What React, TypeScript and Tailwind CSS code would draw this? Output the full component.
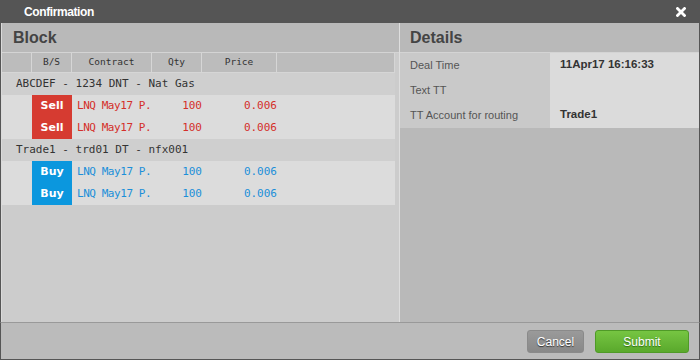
const mono = { fontFamily: '"DejaVu Sans Mono", monospace' };

type Trade = { side: "Buy" | "Sell"; contract: string; qty: string; price: string };

const groups: { name: string; trades: Trade[] }[] = [
  {
    name: "ABCDEF - 1234 DNT - Nat Gas",
    trades: [
      { side: "Sell", contract: "LNQ May17 P.", qty: "100", price: "0.006" },
      { side: "Sell", contract: "LNQ May17 P.", qty: "100", price: "0.006" },
    ],
  },
  {
    name: "Trade1 - trd01 DT - nfx001",
    trades: [
      { side: "Buy", contract: "LNQ May17 P.", qty: "100", price: "0.006" },
      { side: "Buy", contract: "LNQ May17 P.", qty: "100", price: "0.006" },
    ],
  },
];

const details = [
  { label: "Deal Time", value: "11Apr17 16:16:33" },
  { label: "Text TT", value: "" },
  { label: "TT Account for routing", value: "Trade1" },
];

function TradeRow({ trade }: { trade: Trade }) {
  const sell = trade.side === "Sell";
  const color = sell ? "text-[#d42f2a]" : "text-[#1b8fd9]";
  return (
    <div className="flex h-[22px] bg-[#dcdcdc] text-[11px]" style={mono}>
      <div className="w-[30px]" />
      <div
        className={`w-[40px] flex items-center justify-center font-bold text-white text-[11px] ${
          sell ? "bg-[#d63b31]" : "bg-[#0b97de]"
        }`}
        style={{ fontFamily: '"DejaVu Sans", sans-serif' }}
      >
        {trade.side}
      </div>
      <div className={`w-[80px] pl-[5px] flex items-center whitespace-nowrap tracking-[-0.45px] ${color}`}>
        {trade.contract}
      </div>
      <div className={`w-[50px] flex items-center justify-end ${color}`}>{trade.qty}</div>
      <div className={`w-[75px] flex items-center justify-end ${color}`}>{trade.price}</div>
    </div>
  );
}

export default function App() {
  return (
    <div
      className="w-[700px] h-[360px] bg-[#555555] flex flex-col overflow-hidden"
      style={{ fontFamily: '"Liberation Sans", Arial, sans-serif' }}
    >
      {/* Title bar */}
      <div className="h-[23px] flex items-center justify-between pl-[24px] pr-[14px] shrink-0">
        <span className="text-white text-[12px] font-bold tracking-[-0.4px]">Confirmation</span>
        <svg width="10" height="10" viewBox="0 0 10 10">
          <path d="M1.5 1.5 L8.5 8.5 M8.5 1.5 L1.5 8.5" stroke="white" strokeWidth="2.8" strokeLinecap="square" />
        </svg>
      </div>

      {/* Body */}
      <div className="flex flex-1 pl-px pr-px min-h-0">
        {/* Block panel */}
        <div className="w-[398px] bg-[#cccccc] flex flex-col border-l border-[#dadada]">
          <div className="h-[30px] bg-[#b9b9b9] border-b border-[#d4d4d4] flex items-center pl-[11px]">
            <span className="text-[16px] font-bold text-[#444444]">Block</span>
          </div>
          <div className="pr-[4px]">
            <div className="flex h-[20px] bg-[#bcbcbc] text-[9.5px] text-[#333333]" style={mono}>
              <div className="w-[30px] border-r border-b border-[#d6d6d6]" />
              <div className="w-[40px] border-r border-b border-[#d6d6d6] flex items-center justify-center">B/S</div>
              <div className="w-[80px] border-r border-b border-[#d6d6d6] flex items-center justify-center">Contract</div>
              <div className="w-[50px] border-r border-b border-[#d6d6d6] flex items-center justify-center">Qty</div>
              <div className="w-[75px] border-r border-b border-[#d6d6d6] flex items-center justify-center">Price</div>
              <div className="flex-1 border-r border-b border-[#d6d6d6]" />
            </div>
            {groups.map((g) => (
              <div key={g.name}>
                <div
                  className="h-[22px] bg-[#cfcfcf] flex items-center pl-[14px] text-[11px] text-[#333333]"
                  style={mono}
                >
                  {g.name}
                </div>
                {g.trades.map((t, i) => (
                  <TradeRow key={i} trade={t} />
                ))}
              </div>
            ))}
          </div>
        </div>

        <div className="w-px bg-[#dedede]" />

        {/* Details panel */}
        <div className="flex-1 bg-[#b9b9b9] flex flex-col">
          <div className="h-[30px] border-b border-[#d4d4d4] flex items-center pl-[10px]">
            <span className="text-[16px] font-bold text-[#444444]">Details</span>
          </div>
          {details.map((d) => (
            <div key={d.label} className="flex h-[25px] text-[11px]">
              <div className="w-[150px] bg-[#c9c9c9] pl-[10px] pt-[4px] text-[#555555]">{d.label}</div>
              <div className="flex-1 bg-[#dbdbdb] pl-[10px] pt-[3px] font-bold text-[#333333] text-[11.5px]">{d.value}</div>
            </div>
          ))}
        </div>
      </div>

      {/* Footer */}
      <div className="h-[38px] shrink-0 bg-[#bbbbbb] border-t border-[#999999] border-x border-b border-x-[#555555] border-b-[#555555] flex items-start justify-end gap-[11px] pt-[7px] pr-[10px]">
        <button
          className="w-[57px] h-[23px] rounded-[3px] bg-gradient-to-b from-[#9a9a9a] to-[#888888] border border-[#8a8a8a] text-white text-[12px]"
          style={{ textShadow: "0 1px 1px #333" }}
        >
          Cancel
        </button>
        <button
          className="w-[94px] h-[23px] rounded-[3px] bg-gradient-to-b from-[#76c542] to-[#5aa92c] border border-[#4f9a27] text-white text-[12px]"
          style={{ textShadow: "0 1px 1px #2f6a14" }}
        >
          Submit
        </button>
      </div>
    </div>
  );
}
